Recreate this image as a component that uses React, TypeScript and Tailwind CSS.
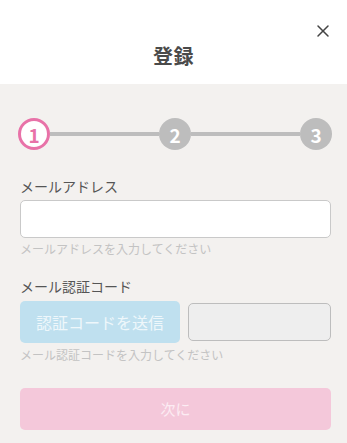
import { X } from 'lucide-react';

const font = { fontFamily: '"Noto Sans CJK JP", "Noto Sans", sans-serif' };

// ─── Stepper ──────────────────────────────────────────────────────────────────
function Stepper() {
  return (
    <div className="flex items-center h-8 -ml-[2px] mr-[-1px]">
      <div className="w-8 h-8 rounded-full border-[3px] border-[#e872a8] bg-white flex items-center justify-center text-[#e872a8] text-[19px] font-bold leading-none shrink-0">
        1
      </div>
      <div className="flex-1 h-[4px] bg-[#bdbdbd]" />
      <div className="w-8 h-8 rounded-full bg-[#bdbdbd] flex items-center justify-center text-white text-[19px] font-bold leading-none shrink-0">
        2
      </div>
      <div className="flex-1 h-[4px] bg-[#bdbdbd]" />
      <div className="w-8 h-8 rounded-full bg-[#bdbdbd] flex items-center justify-center text-white text-[19px] font-bold leading-none shrink-0">
        3
      </div>
    </div>
  );
}

export default function App() {
  return (
    <div className="w-[347px] h-[443px] bg-[#f3f1ef] overflow-hidden" style={font}>
      {/* Header */}
      <div className="relative h-[84px] bg-white flex items-center justify-center pt-[28px]">
        <h1 className="text-[20px] font-bold text-[#4a4a4a] tracking-wide">登録</h1>
        <button className="absolute right-[14px] top-[21px] text-[#444]">
          <X size={20} strokeWidth={1.8} />
        </button>
      </div>

      {/* Body */}
      <div className="pl-5 pr-4 pt-[34px]">
        <Stepper />

        <label className="block mt-[26px] text-[14px] leading-5 text-[#555]">メールアドレス</label>
        <input
          className="block mt-[4px] w-full h-[38px] rounded-[5px] border border-[#c9c9c9] bg-white outline-none"
        />
        <p className="mt-[3px] text-[12px] leading-4 text-[#c3c3c3]">メールアドレスを入力してください</p>

        <label className="block mt-[19px] text-[14px] leading-5 text-[#555]">メール認証コード</label>
        <div className="flex items-center gap-2 mt-[5px]">
          <button className="w-[160px] h-[42px] rounded-[5px] bg-[#bfe0ef] text-[#eef7fb] text-[16px]">
            認証コードを送信
          </button>
          <input className="flex-1 min-w-0 h-[38px] rounded-[5px] border border-[#bdbdbd] bg-[#eeeeee] outline-none" />
        </div>
        <p className="mt-[4px] text-[12px] leading-4 text-[#c3c3c3]">メール認証コードを入力してください</p>

        <button className="block mt-[25px] w-full h-[42px] rounded-[5px] bg-[#f4c8da] text-[#fcecf3] text-[15px]">
          次に
        </button>
      </div>
    </div>
  );
}
